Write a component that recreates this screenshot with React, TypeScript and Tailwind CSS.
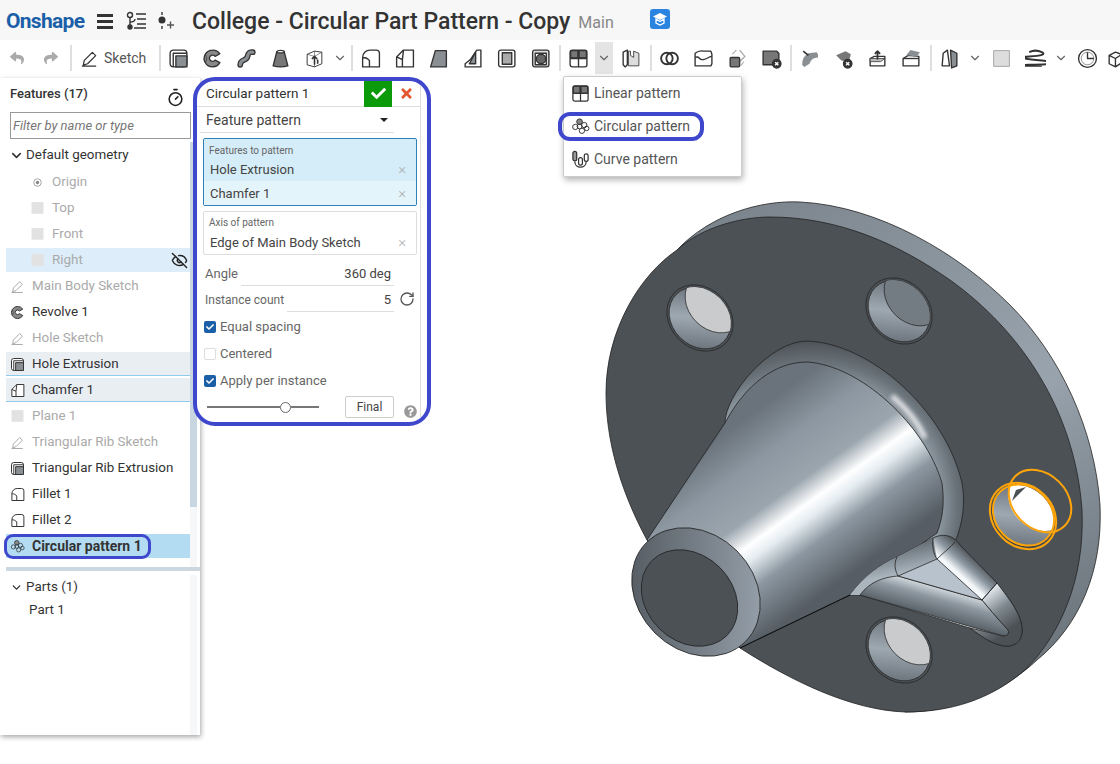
import type { ReactNode } from "react";
import { ChevronDown, EyeOff, RotateCw, Timer } from "lucide-react";
import { FaCheck, FaQuestionCircle, FaReply, FaShare, FaTimes } from "react-icons/fa";

const G = "#8a8f94";

const paths: Record<string, ReactNode> = {
  extrude: (
    <>
      <rect x="2" y="2" width="16" height="16" rx="3" fill="#fff" />
      <path d="M5 18V5h13" />
      <rect x="7.5" y="7.5" width="10.5" height="10.5" fill={G} />
    </>
  ),
  revolve: (
    <>
      <path d="M10 2a8 8 0 1 0 7 12l-4.500-2.500a3 3 0 1 1 0-3.500l4.500-2.500a8 8 0 0 0-7-3.500z" fill="#888" />
      <path d="M3 6q3 4 0 8" strokeWidth="0.700" />
    </>
  ),
  sweep: (
    <>
      <path d="M4 16c0-6 6-3 7-8s3-4 5-4" strokeWidth="5.500" strokeLinecap="round" />
      <path d="M4 16c0-6 6-3 7-8s3-4 5-4" stroke={G} strokeWidth="3" strokeLinecap="round" />
    </>
  ),
  loft: (
    <>
      <path d="M6.500 3.500h7L17 17q-7 2-14 0z" fill="#777" />
      <ellipse cx="10" cy="3.500" rx="3.500" ry="1.200" fill="#fff" />
    </>
  ),
  boxArrow: (
    <>
      <path d="M3 6l7-3 7 1v11l-7 3-7-2z" fill="#fff" strokeWidth="0.900" />
      <path d="M10 3v15M3 6l7 2 7-4" strokeWidth="0.500" />
      <path d="M10 16V8M7.500 10.500 10 8l2.500 2.500M13 15v-4" strokeWidth="1.500" />
    </>
  ),
  fillet: <path d="M2.500 18V9c0-4 3-7 7-7h6a3 3 0 0 1 3 3v13zM2.500 9c3 0 5 1 6.500 3V18" fill="#fff" />,
  chamfer: <path d="M2.500 18V8.500L9 2h9.500v16zM2.500 8.500 8 11v7M9 2l-1 9" fill="#fff" />,
  draft: <path d="M7 2.500h10.500V18H2.500z" fill={G} />,
  rib: (
    <>
      <path d="M3 15l5-4 6-9h4v16H3z" fill="#fff" />
      <path d="M13 4v11H7z" fill={G} />
    </>
  ),
  shell: (
    <>
      <rect x="2.500" y="2" width="15.500" height="16" rx="2" fill="#fff" />
      <rect x="6" y="4.500" width="9" height="11" fill="#aaa" />
    </>
  ),
  hole: (
    <>
      <rect x="2.500" y="2" width="15.500" height="16" rx="2" fill="#ddd" />
      <rect x="5" y="5" width="10.500" height="11" fill="#fff" />
      <circle cx="10.500" cy="10.500" r="4.500" fill="#666" />
    </>
  ),
  grid: (
    <>
      <rect x="2" y="2" width="16" height="16" rx="2" fill="#fff" />
      <path d="M2.500 2.500h7v7h-7zM10.500 2.500h7v7h-7z" fill="#777" />
      <path d="M2 10h16M10 2v16" />
    </>
  ),
  mirror: (
    <>
      <path d="M3 4l4-2v14l-2 2-2-2z" fill="#fff" />
      <path d="M8 3v14h10V5l-5-2v6l-3-2V3z" fill="#ddd" strokeWidth="0.800" />
    </>
  ),
  rings: (
    <>
      <circle cx="7.500" cy="10" r="5.500" strokeWidth="1.800" />
      <circle cx="12.500" cy="10" r="5.500" strokeWidth="1.800" />
    </>
  ),
  splitBox: (
    <>
      <path d="M2 5q4-3 8-2h7l1 3v9l-1 2H2z" fill="#fff" />
      <path d="M2 9c5-2 3 3 8 2s5-3 8-3" />
    </>
  ),
  transform: (
    <>
      <path d="M12 2l5 6-5 5" stroke="#aaa" />
      <path d="M9 2 5 6M16 13l-3 4" stroke="#bbb" />
      <rect x="3" y="9" width="9" height="9" rx="1" fill="#777" />
    </>
  ),
  boxX: (
    <>
      <path d="M2 3h13l2 2v11H2z" fill="#777" />
      <circle cx="15" cy="15" r="4" fill="#333" />
      <path d="M13.500 13.500l3 3M16.500 13.500l-3 3" stroke="#fff" />
    </>
  ),
  face1: (
    <>
      <path d="M3 16q0-8 6-11l8-1q2 3 1 5-6 0-8 6l-5 3z" fill={G} stroke="none" />
      <path d="M4 3l5 4" strokeWidth="1.600" />
    </>
  ),
  face2: (
    <>
      <path d="M3 7l9-4 5 3-2 7-7-1z" fill="#777" stroke="none" />
      <circle cx="14" cy="15" r="4" fill="#333" />
      <path d="M12.500 13.500l3 3M15.500 13.500l-3 3" stroke="#fff" />
    </>
  ),
  moveUp: (
    <>
      <path d="M3 10l4-2h10v9H3z" fill="#fff" />
      <path d="M3 10h14l-4 3H3z" fill="#bbb" strokeWidth="0.700" />
      <path d="M10 11V3M7.500 5.500 10 3l2.500 2.500" strokeWidth="1.700" />
    </>
  ),
  replace: (
    <>
      <path d="M2 10l5-3 10 1v9H2z" fill="#fff" />
      <path d="M2 10h15" />
      <path d="M5 7l4-5 9 2-3 4z" fill={G} stroke="none" />
    </>
  ),
  planeBox: (
    <>
      <path d="M4 5l4-3 2 15H3z" fill="#fff" />
      <path d="M11 2l6 3v12l-5 2z" fill={G} />
    </>
  ),
  sheet: <rect x="2.500" y="2.500" width="15" height="15" fill="#ddd" stroke="#999" strokeWidth="0.800" />,
  helix: <path d="M4 4q6-3 12 0t-12 4 12 4-12 4 12 1" strokeWidth="1.900" />,
  clock: (
    <>
      <circle cx="10" cy="10" r="8.500" />
      <path d="M10 4v6h6" />
      <circle cx="10" cy="10" r="6" strokeWidth="0.500" />
    </>
  ),
  cut: <path d="M3 7l6-3 6 2v8l-6 4-6-3zM3 7l6 3 6-4M9 10v8" fill="#fff" />,
  circular: (
    <>
      <circle cx="9" cy="5" r="3" fill="#888" strokeWidth="1" />
      <circle cx="4.500" cy="10.500" r="2.800" fill="none" strokeWidth="1" />
      <circle cx="14" cy="8.500" r="2.800" fill="none" strokeWidth="1" />
      <circle cx="9" cy="10" r="2.500" fill="none" strokeWidth="1" />
      <circle cx="11.500" cy="14.500" r="2.800" fill="none" strokeWidth="1" />
      <circle cx="16.500" cy="12" r="2.400" fill="none" strokeWidth="1" />
    </>
  ),
  curve: (
    <>
      <rect x="2" y="1.500" width="4" height="10" rx="2" fill="#999" />
      <path d="M4 12c0 8 12 8 12 0" />
      <rect x="8" y="8" width="4" height="8" rx="2" fill="#fff" />
      <rect x="14" y="4" width="4" height="8" rx="2" fill="#fff" />
    </>
  ),
  sketch: <path d="M2 18h15M3.500 17l1-5L13 3.500l3.500 3.500L8 15.500z" fill="none" />,
  origin: (
    <>
      <circle cx="10" cy="10" r="5" stroke="#888" strokeWidth="1" />
      <circle cx="10" cy="10" r="2.200" fill="#888" stroke="none" />
    </>
  ),
  dimSketch: <path d="M2 18h15M3.500 17l1-5L13 3.500l3.500 3.500L8 15.500z" stroke="#aaa" fill="none" />,
  dimSheet: <path d="M2 1.500h16v15.500H2z" fill="#e2e2e2" stroke="none" />,
};

function Icon({ name, size = 20 }: { name: string; size?: number }) {
  return (
    <svg width={size} height={size} viewBox="0 0 20 20" fill="none" stroke="#333" strokeWidth="1.300" strokeLinejoin="round">
      {paths[name]}
    </svg>
  );
}

function Tool({ name }: { name: string }) {
  return (
    <div className="flex h-[30px] w-[34px] shrink-0 items-center justify-center">
      <Icon name={name} size={21} />
    </div>
  );
}

function Chev({ active }: { active?: boolean }) {
  return (
    <div className={`flex h-[32px] w-[18px] shrink-0 items-center justify-center ${active ? "bg-[#e4e4e4]" : ""}`}>
      <ChevronDown size={14} strokeWidth={2} className="text-[#666]" />
    </div>
  );
}

function Sep({ className }: { className: string }) {
  return <div className={`h-[26px] w-[2px] shrink-0 bg-[#dedede] ${className}`} />;
}

interface Row {
  label: string;
  icon: string;
  dim?: boolean;
  indent?: boolean;
  cls?: string;
  bold?: boolean;
}

const rows: Row[] = [
  { label: "Origin", icon: "origin", dim: true, indent: true },
  { label: "Top", icon: "dimSheet", dim: true, indent: true },
  { label: "Front", icon: "dimSheet", dim: true, indent: true },
  { label: "Right", icon: "dimSheet", dim: true, indent: true, cls: "bg-[#ddeefa]" },
  { label: "Main Body Sketch", icon: "dimSketch", dim: true },
  { label: "Revolve 1", icon: "revolve" },
  { label: "Hole Sketch", icon: "dimSketch", dim: true },
  { label: "Hole Extrusion", icon: "extrude", cls: "bg-[#e9eef3] border-b border-[#8ecbec]" },
  { label: "Chamfer 1", icon: "chamfer", cls: "bg-[#e9eef3] border-b border-[#8ecbec]" },
  { label: "Plane 1", icon: "dimSheet", dim: true },
  { label: "Triangular Rib Sketch", icon: "dimSketch", dim: true },
  { label: "Triangular Rib Extrusion", icon: "extrude" },
  { label: "Fillet 1", icon: "fillet" },
  { label: "Fillet 2", icon: "fillet" },
  { label: "Circular pattern 1", icon: "circular", bold: true, cls: "bg-[#b3dcf3]" },
  { label: "", icon: "dimSketch", dim: true },
];

function Sidebar() {
  return (
    <div className="flex h-[657px] w-[200px] shrink-0 flex-col bg-white shadow-[1px_2px_5px_rgba(0,0,0,0.35)]">
      <div className="flex h-[34px] items-center justify-between pb-[2px] pl-[10px] pr-[15px] text-[13px] font-medium text-[#333]">
        <span>Features (17)</span>
        <Timer size={19} strokeWidth={2} className="mt-[6px] text-[#222]" />
      </div>
      <div className="ml-[10px] flex h-[27px] w-[181px] items-center border border-[#999] pl-[2px] pt-[1px] text-[13px] italic text-[#777]">
        Filter by name or type
      </div>
      <div className="mt-[2px] flex h-[426px] overflow-hidden">
        <div className="ml-[6px] flex w-[184px] flex-col">
          <div className="flex h-[28px] shrink-0 items-center pl-[3px] text-[13.4px] text-[#333]">
            <ChevronDown size={15} strokeWidth={2.500} className="mr-[2px] text-[#333]" />
            Default geometry
          </div>
          {rows.map((r, i) => (
            <div
              key={i}
              className={`my-px flex h-[24px] shrink-0 items-center pt-[1px] ${r.indent ? "pl-[23px]" : "pl-[3px]"} ${r.cls ?? ""} ${r.dim ? "text-[#aaa]" : "text-[#333]"} ${r.bold ? "text-[14px] font-bold" : "text-[13.4px]"}`}
            >
              <div className="mr-[7px] flex w-[16px] items-center justify-center">
                <Icon name={r.icon} size={15} />
              </div>
              {r.label}
              {r.label === "Right" && <EyeOff size={17} className="ml-auto mr-[2px] text-[#222]" />}
            </div>
          ))}
        </div>
        <div className="mt-px w-[7px] bg-[#f5f7f9]">
          <div className="h-[365px] bg-[#c8d6e1]" />
        </div>
      </div>
      <div className="ml-[6px] h-[4px] shrink-0 bg-[#ccd7e0]" />
      <div className="flex flex-1">
        <div className="w-[190px] pt-[6px] text-[13.4px] text-[#333]">
          <div className="flex h-[20px] items-center pl-[10px]">
            <ChevronDown size={13} strokeWidth={2.500} className="mr-[3px]" />
            Parts (1)
          </div>
          <div className="mt-[3px] flex h-[20px] items-center pl-[29px]">Part 1</div>
        </div>
        <div className="mt-[4px] w-[7px] bg-[#f5f7f9]" />
      </div>
    </div>
  );
}

function Check({ on, label }: { on: boolean; label: string }) {
  return (
    <div className="flex h-[27px] items-center pl-[7px] text-[13px] text-[#666]">
      <div
        className={`mr-[4px] flex h-[12px] w-[12px] items-center justify-center rounded-[2px] ${on ? "bg-[#1b5fa8]" : "border border-[#ddd]"}`}
      >
        {on && <FaCheck size={8} className="text-white" />}
      </div>
      {label}
    </div>
  );
}

function Dialog() {
  return (
    <div className="absolute left-[193px] top-[77px] h-[349px] w-[238px] overflow-hidden rounded-[22px] border-4 border-[#3f48cc] bg-white">
      <div className="h-full w-[224px] border-r border-[#ddd]">
        <div className="flex h-[26px] items-center border-b border-[#ddd] pl-[9px] text-[13.5px] text-[#333]">
          <span className="flex-1">Circular pattern 1</span>
          <div className="flex h-[26px] w-[28px] items-center justify-center bg-[#0a9a0a]">
            <FaCheck size={15} className="text-white" />
          </div>
          <div className="flex h-[26px] w-[28px] items-center justify-center">
            <FaTimes size={15} className="text-[#e4572e]" />
          </div>
        </div>
        <div className="ml-[3px] flex h-[26px] w-[194px] items-center justify-between border-b border-[#ddd] pl-[6px] pr-[6px] pt-[1px] text-[14px] text-[#444]">
          Feature pattern
          <div className="h-0 w-0 border-x-[4px] border-t-[4px] border-x-transparent border-t-[#222]" />
        </div>
        <div className="ml-[6px] mt-[5px] h-[68px] w-[214px] overflow-hidden rounded-[2px] border border-[#2f80b8] bg-[#d5edf8]">
          <div className="flex h-[19px] items-end pl-[5px] text-[10px] text-[#666]">Features to pattern</div>
          <div className="flex h-[23px] items-center justify-between pl-[6px] pr-[10px] text-[13px] text-[#444]">
            Hole Extrusion
            <span className="text-[15px] font-light text-[#aaa]">×</span>
          </div>
          <div className="flex h-[24px] items-center justify-between bg-[#e4f4fb] pl-[6px] pr-[10px] pt-[1px] text-[13px] text-[#444]">
            Chamfer 1
            <span className="text-[15px] font-light text-[#aaa]">×</span>
          </div>
        </div>
        <div className="ml-[6px] mt-[5px] h-[44px] w-[214px] rounded-[2px] border border-[#ddd]">
          <div className="flex h-[18px] items-end pl-[5px] text-[10px] text-[#666]">Axis of pattern</div>
          <div className="flex h-[24px] items-center justify-between pl-[6px] pr-[10px] pt-[1px] text-[13px] text-[#444]">
            Edge of Main Body Sketch
            <span className="text-[15px] font-light text-[#aaa]">×</span>
          </div>
        </div>
        <div className="ml-[8px] mt-[5px] flex h-[26px] items-center text-[13px] text-[#666]">
          <span className="w-[36px] pt-[2px]">Angle</span>
          <div className="flex h-[26px] w-[153px] items-center justify-end border-b border-[#ddd] pr-[3px] pt-[2px] text-[#444]">360 deg</div>
        </div>
        <div className="ml-[8px] flex h-[26px] items-center text-[13px] text-[#666]">
          <span className="w-[82px] whitespace-nowrap pt-[2px] text-[12px]">Instance count</span>
          <div className="flex h-[26px] w-[107px] items-center justify-end border-b border-[#ddd] pr-[3px] pt-[2px] text-[#444]">5</div>
          <RotateCw size={16} strokeWidth={2} className="ml-[5px] text-[#555]" />
        </div>
        <div className="h-[1px]" />
        <Check on label="Equal spacing" />
        <Check on={false} label="Centered" />
        <Check on label="Apply per instance" />
        <div className="flex h-[26px] items-start pt-[2px]">
          <div className="ml-[10px] flex h-[22px] w-[112px] items-center">
            <div className="h-[2px] w-[73px] bg-[#777]" />
            <div className="h-[11px] w-[11px] shrink-0 rounded-full border border-[#666] bg-white" />
            <div className="h-[2px] w-[28px] bg-[#777]" />
          </div>
          <div className="ml-[26px] flex h-[22px] w-[49px] items-center justify-center rounded-[2px] border border-[#ccc] text-[12px] text-[#444]">
            Final
          </div>
          <FaQuestionCircle size={13} className="ml-[10px] mt-[9px] text-[#999]" />
        </div>
      </div>
    </div>
  );
}

function Hole({ id, x, y, back, orange }: { id: string; x: number; y: number; back: string; orange?: boolean }) {
  return (
    <g transform={`translate(${x} ${y})`}>
      <clipPath id={id}>
        <ellipse rx="33.500" ry="28" transform="rotate(45)" />
      </clipPath>
      <ellipse rx="36" ry="30" transform="rotate(45)" fill="#4c5155" stroke="#222" strokeWidth="0.700" />
      <ellipse rx="33.500" ry="28" transform="rotate(45)" fill="url(#wall)" stroke="#222" strokeWidth="0.700" />
      <g clipPath={`url(#${id})`}>
        <ellipse cx="16" cy="-16" rx="33.500" ry="28" transform="rotate(45 16 -16)" fill={back} stroke={orange ? "none" : "#222"} strokeWidth="0.700" />
      </g>
    </g>
  );
}

function Part() {
  return (
    <svg className="absolute inset-0" width="920" height="686" viewBox="200 78 920 686" fill="none">
      <defs>
        <linearGradient id="rim" gradientUnits="userSpaceOnUse" x1="720" y1="210" x2="1060" y2="650">
          <stop offset="0" stopColor="#7b848c" />
          <stop offset="0.6" stopColor="#98a3ad" />
          <stop offset="1" stopColor="#6c757c" />
        </linearGradient>
        <linearGradient id="wall" x1="0" y1="0" x2="1" y2="1">
          <stop offset="0" stopColor="#596168" />
          <stop offset="0.5" stopColor="#9ea8b1" />
          <stop offset="1" stopColor="#596168" />
        </linearGradient>
        <linearGradient id="cone" gradientUnits="userSpaceOnUse" x1="680" y1="465" x2="790" y2="618">
          <stop offset="0" stopColor="#6a737b" />
          <stop offset="0.22" stopColor="#8c97a1" />
          <stop offset="0.44" stopColor="#9aa5ae" />
          <stop offset="0.56" stopColor="#ffffff" />
          <stop offset="0.63" stopColor="#e4ecf0" />
          <stop offset="0.76" stopColor="#8c97a1" />
          <stop offset="1" stopColor="#565d64" />
        </linearGradient>
        <radialGradient id="fil" gradientUnits="userSpaceOnUse" cx="815" cy="505" r="165">
          <stop offset="0.72" stopColor="#9aa5ae" />
          <stop offset="0.86" stopColor="#6a737a" />
          <stop offset="1" stopColor="#4c5155" />
        </radialGradient>
        <linearGradient id="endRing" gradientUnits="userSpaceOnUse" x1="650" y1="640" x2="745" y2="548">
          <stop offset="0" stopColor="#565d64" />
          <stop offset="1" stopColor="#949ea8" />
        </linearGradient>
        <linearGradient id="ribG" gradientUnits="userSpaceOnUse" x1="940" y1="588" x2="928" y2="631">
          <stop offset="0" stopColor="#cfd7dc" />
          <stop offset="0.25" stopColor="#8d979f" />
          <stop offset="0.65" stopColor="#596168" />
          <stop offset="1" stopColor="#4c5155" />
        </linearGradient>
        <linearGradient id="ribR" gradientUnits="userSpaceOnUse" x1="960" y1="580" x2="978" y2="560">
          <stop offset="0.15" stopColor="#f4f8fa" />
          <stop offset="0.55" stopColor="#8c97a1" />
          <stop offset="1" stopColor="#4c5155" />
        </linearGradient>
        <linearGradient id="ribT" gradientUnits="userSpaceOnUse" x1="915" y1="545" x2="920" y2="570">
          <stop offset="0" stopColor="#6a737a" />
          <stop offset="1" stopColor="#aab5be" />
        </linearGradient>
        <linearGradient id="ribTip" gradientUnits="userSpaceOnUse" x1="985" y1="592" x2="1012" y2="628">
          <stop offset="0" stopColor="#e8eef2" />
          <stop offset="0.5" stopColor="#7f8990" />
          <stop offset="1" stopColor="#4c5155" />
        </linearGradient>
        <filter id="soft">
          <feGaussianBlur stdDeviation="2" />
        </filter>
      </defs>
      <path d="M677 250C710 215 760 200 800 202C880 206 960 255 1010 305C1060 355 1095 430 1100 505C1103 570 1080 625 1037 660C1000 695 950 712 905 712L640 400Z" fill="url(#rim)" stroke="#222" strokeWidth="0.800" />
      <path d="M606 393C606 330 640 275 677 250C700 228 740 217 770 217C840 217 900 245 950 280C1020 330 1075 410 1082 510C1085 580 1060 635 1025 670C990 700 950 712 905 712C850 710 790 680 740 648L647 540C620 490 606 440 606 393Z" fill="#4c5155" stroke="#222" strokeWidth="0.800" />
      <Hole id="h1" x={700} y={318} back="#c9cbcd" />
      <Hole id="h2" x={899} y={311} back="#747c83" />
      <Hole id="h3" x={899} y={650} back="#c9cbcd" />
      <path d="M725 423C725 395 770 341 807 341C870 343 945 410 962 483C966 505 962 525 955 542L937 545L800 500Z" fill="url(#fil)" stroke="#222" strokeWidth="0.800" />
      <path d="M892 396C905 407 917 420 925 438" stroke="#fff" strokeWidth="5" opacity="0.800" filter="url(#soft)" />
      <path d="M647 540L725 423C745 385 775 362 807 362C860 365 925 425 942 483C945 505 942 520 937 533L850 595L740 648Z" fill="url(#cone)" stroke="#222" strokeWidth="0.800" />
      <path d="M850 595C865 575 880 565 897 557L933 538C945 532 955 537 960 545L997 583C1010 600 1022 615 1022 630C1022 645 1010 648 1000 645C990 643 980 635 970 628L860 595Z" fill="url(#ribR)" stroke="#222" strokeWidth="0.800" />
      <path d="M982 600L997 583C1010 600 1022 615 1022 630C1022 645 1010 648 1000 645C990 643 980 635 970 628L1000 635C1005 637 1010 635 1008 630C1003 625 990 610 982 600Z" fill="url(#ribTip)" stroke="#222" strokeWidth="0.800" />
      <path d="M850 595C865 575 880 565 897 557L933 538L937 559L898 576C885 577 870 581 860 595Z" fill="url(#ribT)" />
      <path d="M860 595C870 581 885 577 898 576L982 600C990 610 1003 625 1008 630C1010 635 1005 637 1000 635L860 595Z" fill="url(#ribG)" stroke="#222" strokeWidth="0.800" />
      <path d="M898 576L937 559L982 600Z" fill="#b7c2cc" stroke="#222" strokeWidth="0.800" />
      <path d="M897 557C893 565 896 572 898 576M933 538C932 548 934 555 937 559C944 552 950 548 955 542M982 600L997 583" stroke="#222" strokeWidth="0.800" />
      <path d="M740 648L850 595" stroke="#111" strokeWidth="1" />
      <ellipse cx="696" cy="592" rx="70" ry="58" transform="rotate(45 696 592)" fill="url(#endRing)" stroke="#222" strokeWidth="0.800" />
      <ellipse cx="689.500" cy="598" rx="53" ry="43" transform="rotate(45 689.500 598)" fill="#4c5155" stroke="#222" strokeWidth="0.800" />
      <Hole id="h4" x={1023} y={516} back="#ffffff" orange />
      <path d="M1012 501L1016 490L1026 487Z" fill="#4c5155" />
      <g stroke="#ffa50a" strokeWidth="2">
        <ellipse cx="1023" cy="516" rx="36" ry="30" transform="rotate(45 1023 516)" />
        <ellipse cx="1023.500" cy="515" rx="33" ry="28" transform="rotate(45 1023.500 515)" />
        <ellipse cx="1040" cy="501" rx="35" ry="27" transform="rotate(45 1040 501)" />
      </g>
    </svg>
  );
}

function Dropdown() {
  const items = [
    { n: "grid", t: "Linear pattern" },
    { n: "circular", t: "Circular pattern" },
    { n: "curve", t: "Curve pattern" },
  ];
  return (
    <div className="absolute left-[563px] top-[76px] w-[179px] rounded-[2px] border border-[#ccc] bg-white shadow-[1px_3px_6px_rgba(0,0,0,0.3)]">
      {items.map((it) => (
        <div key={it.t} className="flex h-[33px] items-center pl-[7px] text-[14px] text-[#555]">
          <div className="mr-[4px] flex w-[19px] justify-center">
            <Icon name={it.n} size={19} />
          </div>
          {it.t}
        </div>
      ))}
    </div>
  );
}

export default function App() {
  return (
    <div className="relative h-[764px] w-[1120px] overflow-hidden bg-white font-['Roboto',sans-serif]">
      <div className="flex h-[40px] items-center bg-[#f7f7f7] pt-[2px]">
        <span className="ml-[6px] w-[85px] text-[21px] font-bold leading-none tracking-[-0.7px] text-[#1a5fa8]">Onshape</span>
        <div className="ml-[6px] flex w-[16px] flex-col gap-[3px]">
          <div className="h-[3px] bg-[#333]" />
          <div className="h-[3px] bg-[#333]" />
          <div className="h-[3px] bg-[#333]" />
        </div>
        <svg className="ml-[12px]" width="22" height="20" viewBox="0 0 22 20" fill="none" stroke="#333" strokeWidth="1.400">
          <circle cx="5" cy="4" r="2.500" />
          <circle cx="5" cy="16" r="2" fill="#333" />
          <path d="M5 6.500V14M5 11c4 0 5-1 5-3M11 3h10M12 8h9M12 13h9M9 17h12" />
        </svg>
        <svg className="ml-[10px]" width="20" height="20" viewBox="0 0 20 20" fill="none" stroke="#333" strokeWidth="1.400">
          <path d="M5 1v3M5 15v3" />
          <circle cx="5" cy="9" r="2.800" fill="#333" />
          <path d="M10 14h7M13.500 10.500v7" stroke="#555" />
        </svg>
        <span className="ml-[15px] whitespace-nowrap text-[23px] font-medium leading-none text-[#333]">College - Circular Part Pattern - Copy</span>
        <span className="ml-[8px] mt-[3px] text-[16px] text-[#888]">Main</span>
        <div className="ml-[36px] -mt-[4px] flex h-[20px] w-[20px] items-center justify-center rounded-[3px] bg-[#2b84e0]">
          <svg width="16" height="16" viewBox="0 0 16 16" fill="#fff">
            <path d="M8 2 1 5.500 8 9l7-3.500z" />
            <path d="M4 8v4l4 2 4-2V8L8 10.500z" fill="none" stroke="#fff" strokeWidth="1.300" />
          </svg>
        </div>
      </div>

      <div className="flex h-[38px] items-center pb-[2px]">
        <div className="flex h-[30px] w-[34px] shrink-0 items-center justify-center">
          <FaReply size={14} className="text-[#aaa]" />
        </div>
        <div className="flex h-[30px] w-[34px] shrink-0 items-center justify-center">
          <FaShare size={14} className="text-[#aaa]" />
        </div>
        <Sep className="ml-[2px]" />
        <div className="ml-[8px] flex w-[78px] shrink-0 items-center text-[14px] text-[#555]">
          <Icon name="sketch" size={19} />
          <span className="ml-[5px]">Sketch</span>
        </div>
        <Sep className="ml-[1px]" />
        <Tool name="extrude" />
        <Tool name="revolve" />
        <Tool name="sweep" />
        <Tool name="loft" />
        <Tool name="boxArrow" />
        <Chev />
        <Sep className="ml-[2px]" />
        <Tool name="fillet" />
        <Tool name="chamfer" />
        <Tool name="draft" />
        <Tool name="rib" />
        <Tool name="shell" />
        <Tool name="hole" />
        <Sep className="ml-[2px]" />
        <Tool name="grid" />
        <Chev active />
        <Tool name="mirror" />
        <Sep className="ml-[3px]" />
        <Tool name="rings" />
        <Tool name="splitBox" />
        <Tool name="transform" />
        <Tool name="boxX" />
        <Sep className="ml-[2px]" />
        <Tool name="face1" />
        <Tool name="face2" />
        <Tool name="moveUp" />
        <Tool name="replace" />
        <Sep className="ml-[2px]" />
        <Tool name="planeBox" />
        <Chev />
        <Tool name="sheet" />
        <Tool name="helix" />
        <Chev />
        <Tool name="clock" />
        <div className="-ml-[5px]">
          <Tool name="cut" />
        </div>
      </div>

      <div className="flex">
        <Sidebar />
        <div className="relative flex-1" />
      </div>

      <div className="absolute left-[200px] top-[78px] h-[686px] w-[920px]">
        <Part />
      </div>
      <Dropdown />
      <Dialog />
      <div className="absolute left-[558px] top-[112px] h-[29px] w-[146px] rounded-[12px] border-4 border-[#3f48cc]" />
      <div className="absolute left-[4px] top-[534px] h-[25px] w-[147px] rounded-[9px] border-[3px] border-[#3f48cc]" />
    </div>
  );
}
